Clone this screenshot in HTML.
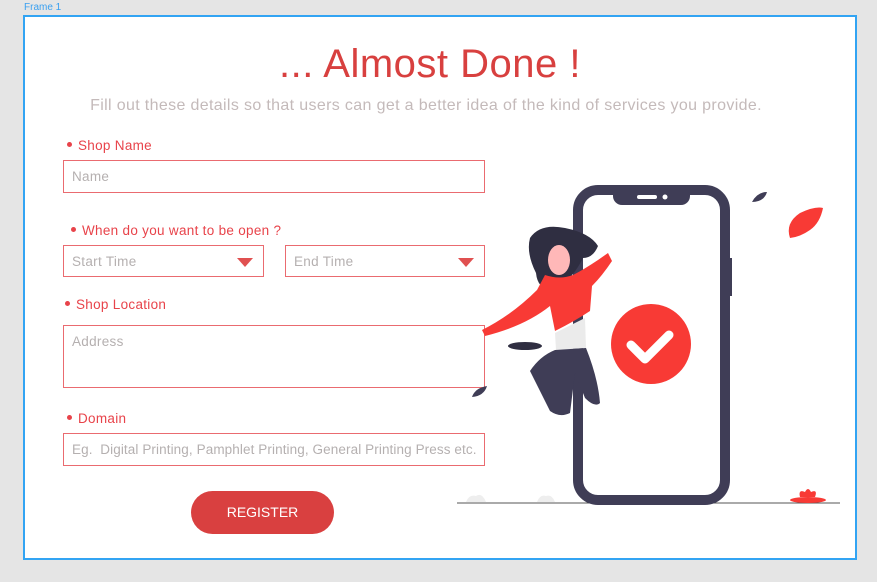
<!DOCTYPE html>
<html><head><meta charset="utf-8"><style>
*{margin:0;padding:0;box-sizing:border-box}
body{width:877px;height:582px;background:#e5e5e5;position:relative;overflow:hidden;font-family:"Liberation Sans",sans-serif}
.lbl0{position:absolute;left:24px;top:2px;font-size:10px;color:#3aa0f0}
.frame{position:absolute;left:23px;top:15px;width:834px;height:545px;background:#fff;border:2px solid #32a4f3}
.a{position:absolute}
h1{position:absolute;left:0;width:860px;top:42px;text-align:center;font-weight:normal;font-size:40px;color:#d8403f;letter-spacing:0.5px}
.sub{position:absolute;left:0;width:852px;top:97px;text-align:center;font-size:16px;color:#c4baba;letter-spacing:0.35px}
.lab{position:absolute;font-size:13.5px;color:#e8434a;letter-spacing:0.3px}
.lab:before{content:"";display:inline-block;width:5px;height:5px;border-radius:50%;background:#e8434a;margin-right:6px;vertical-align:middle;position:relative;top:-2px}
.in{position:absolute;border:1.5px solid #ea6b70;font-size:13.5px;color:#b5b0b0;padding:8px 0 0 8px;background:#fff;letter-spacing:0.3px;white-space:nowrap;overflow:hidden}
.tri{position:absolute;right:10px;top:12px;width:0;height:0;border-left:8px solid transparent;border-right:8px solid transparent;border-top:9px solid #e05050}
.btn{position:absolute;left:191px;top:491px;width:143px;height:43px;border-radius:22px;background:#d94040;color:#fff;font-size:14px;text-align:center;line-height:43px}
</style></head><body>
<div class="lbl0">Frame 1</div>
<div class="frame"></div>
<h1>... Almost Done !</h1>
<div class="sub">Fill out these details so that users can get a better idea of the kind of services you provide.</div>
<div class="lab" style="left:67px;top:138px">Shop Name</div>
<div class="in" style="left:63px;top:160px;width:422px;height:33px">Name</div>
<div class="lab" style="left:71px;top:223px">When do you want to be open ?</div>
<div class="in" style="left:63px;top:245px;width:201px;height:32px">Start Time<div class="tri"></div></div>
<div class="in" style="left:285px;top:245px;width:200px;height:32px">End Time<div class="tri"></div></div>
<div class="lab" style="left:65px;top:297px">Shop Location</div>
<div class="in" style="left:63px;top:325px;width:422px;height:63px">Address</div>
<div class="lab" style="left:67px;top:411px">Domain</div>
<div class="in" style="left:63px;top:433px;width:422px;height:33px;font-size:13.5px;letter-spacing:0.1px">Eg.&nbsp; Digital Printing, Pamphlet Printing, General Printing Press etc.</div>
<div class="btn">REGISTER</div>
<svg class="a" style="left:0;top:0" width="877" height="582">
<line x1="457" y1="503" x2="840" y2="503" stroke="#555" stroke-width="1"/>
<rect x="578" y="190" width="147" height="310" rx="20" fill="#fff" stroke="#3f3d56" stroke-width="10"/>
<rect x="728" y="258" width="4" height="38" fill="#3f3d56"/>
<path d="M613 190 h77 v6 a9 9 0 0 1 -9 9 h-59 a9 9 0 0 1 -9 -9z" fill="#3f3d56"/>
<rect x="637" y="195" width="20" height="4" rx="2" fill="#fff"/><circle cx="665" cy="197" r="2.5" fill="#fff"/>
<circle cx="651" cy="344" r="40" fill="#f83a35"/>
<path d="M631 345 l14 14 l24 -24" fill="none" stroke="#fff" stroke-width="9" stroke-linecap="round" stroke-linejoin="round"/>
<path d="M530 238 q10 -15 35 -10 q25 5 33 18 q-5 12 -15 12 q-10 20 -25 30 q-20 5 -22 -15 q-10 -20 -6 -35z" fill="#2f2e41"/>
<ellipse cx="559" cy="260" rx="11" ry="15" fill="#ffb8b8"/>
<path d="M545 275 q15 5 28 0 q10 -5 25 -15 l10 -7 l4 8 q-10 15 -20 25 l-2 25 q-15 10 -35 20 l-5 -25 q-25 20 -65 30 l-3 -6 q30 -15 55 -40z" fill="#f83a35"/>
<path d="M555 333 l30 -15 l1 30 l-30 2z" fill="#ebebeb"/>
<path d="M555 350 l31 -2 q12 30 14 55 q-5 5 -15 -5 l-10 -25 l-5 40 q-10 5 -20 -2 q-10 -20 -20 -40 q10 -15 25 -21z" fill="#3f3d56"/>
<ellipse cx="525" cy="346" rx="17" ry="4" fill="#2f2e41"/>
<path d="M752 202 q5 -10 15 -10 q-3 10 -15 10z" fill="#3f3d56"/>
<path d="M472 397 q3 -9 15 -11 q-3 10 -15 11z" fill="#3f3d56"/>
<path d="M790 238 q-5 -15 10 -25 q15 -7 23 -5 q-3 15 -13 22 q-10 7 -20 8z" fill="#f83a35"/>
<ellipse cx="808" cy="500" rx="18" ry="3" fill="#f83a35"/>
<path d="M800 497 q-2 -8 5 -5 q3 -6 6 0 q7 -3 4 5z" fill="#f83a35"/>
<path d="M466 502 q3 -8 10 -6 q6 -4 10 6z" fill="#eee"/>
<path d="M537 502 q3 -8 9 -6 q6 -2 9 6z" fill="#eee"/>
</svg>
</body></html>
